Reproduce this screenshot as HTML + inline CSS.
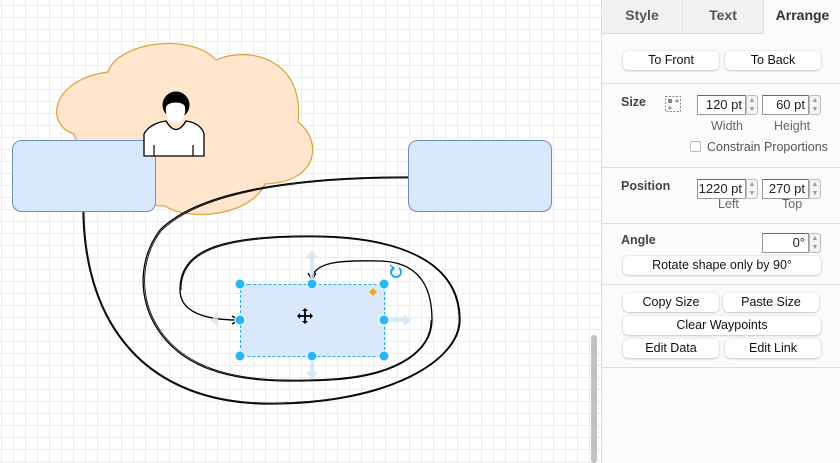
<!DOCTYPE html>
<html><head><style>
*{margin:0;padding:0;box-sizing:border-box}
body{width:840px;height:463px;overflow:hidden;font-family:"Liberation Sans",sans-serif;position:relative;background:#fff}
#canvas{position:absolute;left:0;top:0;width:601px;height:463px;background-color:#fff;
background-image:linear-gradient(#ebebf0 1px,transparent 1px),linear-gradient(90deg,#ebebf0 1px,transparent 1px);
background-size:12px 12px;background-position:1px 5px}
#scroll{position:absolute;left:591px;top:335px;width:6px;height:128px;background:#c2c2c2;border-radius:3px}
#panel{position:absolute;left:601px;top:0;width:239px;height:463px;background:#fbfbfb;border-left:1px solid #dcdcdc;font-size:12.5px;color:#222}
.tab{position:absolute;top:0;height:34px;text-align:center;line-height:31px;font-weight:bold;font-size:14px;color:#555;background:#f1f1f1;border-right:1px solid #ddd;border-bottom:1px solid #ddd}
.btn{position:absolute;height:19px;background:#fff;border-radius:5px;box-shadow:0 0.5px 2px rgba(0,0,0,.3);text-align:center;line-height:19px;font-size:12.5px;color:#111}
.sep{position:absolute;left:0;width:239px;height:1px;background:#ddd}
.lbl{position:absolute;font-weight:bold;color:#444;font-size:12.5px}
.inp{position:absolute;height:20px;background:#fff;border:1px solid #999;border-top-color:#666;text-align:right;padding-right:3px;line-height:18px;font-size:13px}
.spin{position:absolute;width:12px;height:20px;border:1px solid #bbb;border-radius:3px;background:#f4f4f4;font-size:7px;color:#999;text-align:center;line-height:9px}
.sub{position:absolute;font-size:12.5px;color:#666}
</style></head><body>
<div id="canvas">
<svg width="601" height="463" style="position:absolute;left:0;top:0">
<path d="M74,134 C45,125 50,80 108,72 C118,42 190,32 216,60 C250,45 305,60 298,122 C322,140 320,182 265,184 C250,216 190,222 165,206 C120,206 85,185 80,150 Z" fill="#ffe6cc" stroke="#d6a43a" stroke-width="1.2"/>
<rect x="12.5" y="140.5" width="143" height="71" rx="9" fill="#dae8fc" stroke="#6c8ebf"/>
<rect x="408.5" y="140.5" width="143" height="71" rx="9" fill="#dae8fc" stroke="#6c8ebf"/>
<g stroke="#000" fill="none" stroke-width="1.3">
<path d="M83,212 C85,330 150,404 270,404 C390,404 460,360 460,320 C460,262 400,236 310,236 C220,236 180,250 180,290 C180,312 205,320 238,320"/>
<path d="M84,212 C86,330 151,403 270,403 C389,403 459,360 459,320 C459,262 400,237 310,237 C221,237 181,251 181,290" stroke-width="0.8"/>
<path d="M408,177 C300,177 200,190 160,230 C130,270 140,330 190,360 C230,384 290,382 330,380 C400,376 432,350 432,320 C432,288 420,262 380,261 C340,260 315,262 312,278"/>
<path d="M408,178 C300,178 201,191 161,231 C132,270 141,329 191,359 C231,383 290,381 330,379 C399,375 431,350 431,320" stroke-width="0.8"/>
</g>
<path d="M232,316 L239,320 L232,324" stroke="#000" fill="none" stroke-width="1.3"/>
<path d="M308,273 L312,280 L316,273" stroke="#000" fill="none" stroke-width="1.3"/>
<g fill="#cfe6f7" opacity=".8">
<path d="M312,250 L306,258 L310,258 L310,280 L314,280 L314,258 L318,258Z"/>
<path d="M312,380 L306,372 L310,372 L310,360 L314,360 L314,372 L318,372Z"/>
<path d="M412,320 L404,314 L404,318 L388,318 L388,322 L404,322 L404,326Z"/>
<path d="M210,320 L218,314 L218,326Z"/>
</g>
<rect x="240.5" y="284.5" width="144" height="72" rx="8" fill="#dae8fc" stroke="#29a8f0" stroke-dasharray="3,2"/>
<g fill="#29b6f6" stroke="#fff" stroke-width="1">
<circle cx="240" cy="284" r="5"/><circle cx="312" cy="284" r="5"/><circle cx="384" cy="284" r="5"/>
<circle cx="240" cy="320" r="5"/><circle cx="384" cy="320" r="5"/>
<circle cx="240" cy="356" r="5"/><circle cx="312" cy="356" r="5"/><circle cx="384" cy="356" r="5"/>
</g>
<path d="M373,288 L377,292 L373,296 L369,292Z" fill="#f5a623"/>
<path d="M399,268 A5,5 0 1 1 393,268" stroke="#29a8f0" stroke-width="2" fill="none"/>
<path d="M390,265 L394,268 L392,271" stroke="#29a8f0" stroke-width="1.5" fill="none"/>
<g stroke="#000" stroke-width="1.8"><path d="M305,310 L305,322 M299,316 L311,316"/></g>
<path d="M305,308 L302,311 L308,311Z M305,324 L302,321 L308,321Z M297,316 L300,313 L300,319Z M313,316 L310,313 L310,319Z"/>
<path d="M144,156 L144,134 C148,126 158,122 166,121 Q176,138 186,121 C194,122 202,126 204,134 L204,156 Z" fill="#fff" stroke="#000" stroke-width="1.3"/>
<path d="M154,145 L154,156 M193,145 L193,156" stroke="#000" stroke-width="1.2"/>
<circle cx="176" cy="105" r="13.5" fill="#000"/>
<path d="M166,107 C168,101 184,101 185,107 C186,114 183,119 181,121 Q176,124 170,121 C168,119 165,114 166,107Z" fill="#fff"/>
</svg>
<div id="scroll"></div>
</div>
<div id="panel">
<div class="tab" style="left:0;width:81px">Style</div>
<div class="tab" style="left:81px;width:81px">Text</div>
<div class="tab" style="left:162px;width:77px;background:#fbfbfb;border:none;color:#333">Arrange</div>
<div class="btn" style="left:21px;top:51px;width:96px">To Front</div>
<div class="btn" style="left:123px;top:51px;width:96px">To Back</div>
<div class="sep" style="top:83px"></div>
<div class="lbl" style="left:19px;top:95px">Size</div>
<svg style="position:absolute;left:62px;top:95px" width="18" height="18"><rect x="1.5" y="1.5" width="15" height="15" fill="none" stroke="#888" stroke-dasharray="2,1.5"/><rect x="4" y="4" width="4" height="4" fill="#888"/><path d="M11,6h4M13,4v4M6,11v4M4,13h4" stroke="#888"/></svg>
<div class="inp" style="left:95px;top:95px;width:49px">120 pt</div><div class="spin" style="left:144px;top:95px">▲<br>▼</div>
<div class="inp" style="left:160px;top:95px;width:47px">60 pt</div><div class="spin" style="left:207px;top:95px">▲<br>▼</div>
<div class="sub" style="left:109px;top:119px">Width</div>
<div class="sub" style="left:172px;top:119px">Height</div>
<div style="position:absolute;left:88px;top:141px;width:11px;height:11px;border:1px solid #bbb;border-radius:2px;background:#fff"></div>
<div class="sub" style="left:105px;top:140px;color:#555">Constrain Proportions</div>
<div class="sep" style="top:167px"></div>
<div class="lbl" style="left:19px;top:179px">Position</div>
<div class="inp" style="left:95px;top:179px;width:49px">1220 pt</div><div class="spin" style="left:144px;top:179px">▲<br>▼</div>
<div class="inp" style="left:160px;top:179px;width:47px">270 pt</div><div class="spin" style="left:207px;top:179px">▲<br>▼</div>
<div class="sub" style="left:116px;top:197px">Left</div>
<div class="sub" style="left:180px;top:197px">Top</div>
<div class="sep" style="top:223px"></div>
<div class="lbl" style="left:19px;top:233px">Angle</div>
<div class="inp" style="left:160px;top:233px;width:47px">0°</div><div class="spin" style="left:207px;top:233px">▲<br>▼</div>
<div class="btn" style="left:21px;top:256px;width:198px">Rotate shape only by 90°</div>
<div class="sep" style="top:284px"></div>
<div class="btn" style="left:21px;top:293px;width:96px">Copy Size</div>
<div class="btn" style="left:121px;top:293px;width:96px">Paste Size</div>
<div class="btn" style="left:21px;top:316px;width:198px">Clear Waypoints</div>
<div class="btn" style="left:21px;top:339px;width:96px">Edit Data</div>
<div class="btn" style="left:123px;top:339px;width:96px">Edit Link</div>
<div class="sep" style="top:367px"></div>
</div>
</body></html>
